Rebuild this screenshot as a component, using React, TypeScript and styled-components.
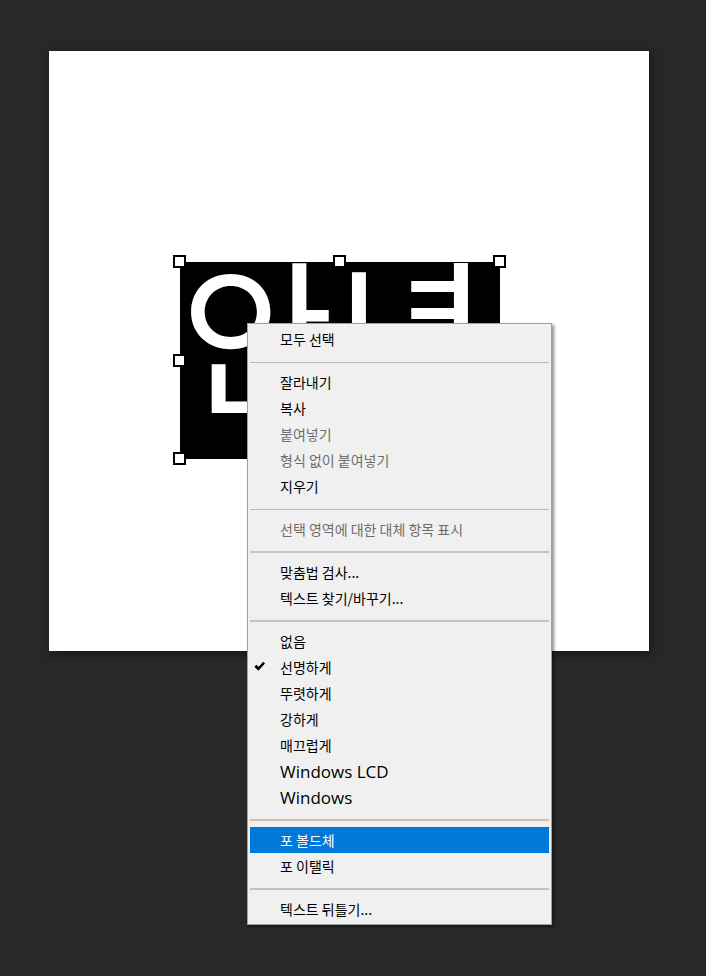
import { FC } from 'react'
import styled, { createGlobalStyle } from 'styled-components'

type MenuEntry =
  | { kind: 'sep'; thick?: boolean }
  | { kind: 'item'; label: string; disabled?: boolean; checked?: boolean; active?: boolean; large?: boolean }

const entries: MenuEntry[] = [
  { kind: 'item', label: '모두 선택' },
  { kind: 'sep' },
  { kind: 'item', label: '잘라내기' },
  { kind: 'item', label: '복사' },
  { kind: 'item', label: '붙여넣기', disabled: true },
  { kind: 'item', label: '형식 없이 붙여넣기', disabled: true },
  { kind: 'item', label: '지우기' },
  { kind: 'sep' },
  { kind: 'item', label: '선택 영역에 대한 대체 항목 표시', disabled: true },
  { kind: 'sep', thick: true },
  { kind: 'item', label: '맞춤법 검사...' },
  { kind: 'item', label: '텍스트 찾기/바꾸기...' },
  { kind: 'sep', thick: true },
  { kind: 'item', label: '없음' },
  { kind: 'item', label: '선명하게', checked: true },
  { kind: 'item', label: '뚜렷하게' },
  { kind: 'item', label: '강하게' },
  { kind: 'item', label: '매끄럽게' },
  { kind: 'item', label: 'Windows LCD', large: true },
  { kind: 'item', label: 'Windows', large: true },
  { kind: 'sep', thick: true },
  { kind: 'item', label: '포 볼드체', active: true },
  { kind: 'item', label: '포 이탤릭' },
  { kind: 'sep', thick: true },
  { kind: 'item', label: '텍스트 뒤틀기...' },
]

// selection handles, in % of the text frame
const handles = [
  { x: 0, y: 0 },
  { x: 50, y: 0 },
  { x: 100, y: 0 },
  { x: 0, y: 50 },
  { x: 0, y: 100 },
]

const App: FC = () => {
  return (
    <>
      <GlobalStyle />
      <Page>
        <Canvas>
          <TextFrame>
            <BigText>안녕</BigText>
            {handles.map((h, i) => (
              <Handle key={i} $x={h.x} $y={h.y} />
            ))}
          </TextFrame>
          <Menu>
            {entries.map((e, i) =>
              e.kind === 'sep' ? (
                <Separator key={i} $thick={e.thick} />
              ) : (
                <Item key={i} $disabled={e.disabled} $active={e.active} $large={e.large}>
                  {e.checked && (
                    <Check viewBox="0 0 10 10">
                      <path d="M0.3 5.3 L2.2 3.5 L4 5.5 L8.4 0.6 L10 2.2 L4 8.9 Z" fill="#000" />
                    </Check>
                  )}
                  {e.label}
                </Item>
              ),
            )}
          </Menu>
        </Canvas>
      </Page>
    </>
  )
}

export default App

const GlobalStyle = createGlobalStyle`
  html, body {
    margin: 0;
    padding: 0;
    background: #282828;
  }
  body {
    font-family: 'Noto Sans CJK KR', 'Noto Sans', sans-serif;
  }
`
const Page = styled.div`
  width: 706px;
  height: 976px;
  padding: 51px 0 0 49px;
  box-sizing: border-box;
  background: #282828;
  overflow: hidden;
`
const Canvas = styled.div`
  position: relative;
  width: 600px;
  height: 600px;
  background: #fff;
  box-shadow: 2px 3px 10px rgba(0, 0, 0, 0.45);
  padding: 211px 0 0 131px;
  box-sizing: border-box;
`
const TextFrame = styled.div`
  position: relative;
  width: 320px;
  height: 197px;
  background: #000;
`
const BigText = styled.div`
  height: 100%;
  overflow: hidden;
  color: #fff;
  font-family: 'Noto Sans CJK KR', sans-serif;
  font-size: 168px;
  line-height: 168px;
  white-space: nowrap;
  transform: translateY(-16px);
`
const Handle = styled.div<{ $x: number; $y: number }>`
  position: absolute;
  left: calc(${p => p.$x}% - 7px);
  top: calc(${p => p.$y}% - 7px);
  width: 13px;
  height: 13px;
  box-sizing: border-box;
  border: 2px solid #000;
  background: #fff;
`
const Menu = styled.div`
  position: absolute;
  left: 198px;
  top: 272px;
  width: 305px;
  box-sizing: border-box;
  padding: 2px 0;
  display: flex;
  flex-direction: column;
  background: #f0f0f0;
  border: 1px solid #a0a0a0;
  box-shadow: 2px 2px 3px rgba(0, 0, 0, 0.45);
`
const Separator = styled.div<{ $thick?: boolean }>`
  height: 17px;
  display: flex;
  align-items: flex-start;
  margin: 0 2px;
  &::before {
    content: '';
    display: block;
    width: 100%;
    height: ${p => (p.$thick ? 2 : 1)}px;
    margin-top: ${p => (p.$thick ? 9 : 10)}px;
    background: ${p => (p.$thick ? '#c3c3c3' : '#b9b9b9')};
  }
`
const Item = styled.div<{ $disabled?: boolean; $active?: boolean; $large?: boolean }>`
  position: relative;
  height: 26px;
  margin: 0 2px;
  padding-left: 30px;
  display: flex;
  align-items: center;
  white-space: pre;
  font-family: ${p =>
    p.$large ? "'Open Sans', 'Noto Sans', sans-serif" : "'Noto Sans CJK KR', 'Noto Sans', sans-serif"};
  font-size: ${p => (p.$large ? '17px' : '14px')};
  color: ${p => (p.$active ? '#fff' : p.$disabled ? '#6d6d6d' : '#000')};
  background: ${p => (p.$active ? '#0078d7' : 'transparent')};
`
const Check = styled.svg`
  position: absolute;
  left: 4px;
  top: 7px;
  width: 11px;
  height: 11px;
`
